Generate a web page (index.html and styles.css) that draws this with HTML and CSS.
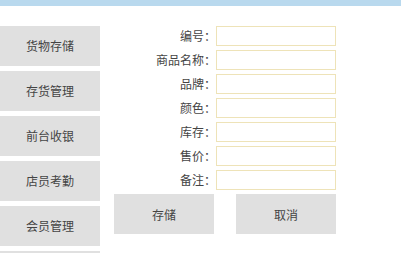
FILE: index.html
```html
<!DOCTYPE html>
<html lang="zh-CN">
<head>
  <meta charset="UTF-8" />
  <title>商品管理</title>
  <link rel="stylesheet" href="styles.css">
</head>
<body>
  <div class="topbar"></div>
  <div class="main">
    <!-- 左侧菜单 -->
    <div class="menu">
      <div class="menu-item">货物存储</div>
      <div class="menu-item">存货管理</div>
      <div class="menu-item">前台收银</div>
      <div class="menu-item">店员考勤</div>
      <div class="menu-item">会员管理</div>
      <div class="menu-item"></div>
    </div>

    <!-- 商品表单 -->
    <form class="goods-form">
      <label class="label">编号：</label><input type="text" class="field" />
      <label class="label">商品名称：</label><input type="text" class="field" />
      <label class="label">品牌：</label><input type="text" class="field" />
      <label class="label">颜色：</label><input type="text" class="field" />
      <label class="label">库存：</label><input type="text" class="field" />
      <label class="label">售价：</label><input type="text" class="field" />
      <label class="label">备注：</label><input type="text" class="field" />
      <div class="actions">
        <button type="submit" class="btn">存储</button>
        <button type="button" class="btn">取消</button>
      </div>
    </form>
  </div>
</body>
</html>
```

FILE: styles.css
```css
body {
  margin: 0;
  font-family: "Noto Sans CJK SC", "Liberation Sans", sans-serif;
  font-size: 12px;
  color: #444;
  background: #fff;
  height: 253px;
  overflow: hidden;
}
.topbar {
  height: 6px;
  background: #b9d9ee;
}
.main {
  display: flex;
  padding-top: 20px;
}
.menu {
  width: 100px;
  display: flex;
  flex-direction: column;
  gap: 5px;
}
.menu-item {
  height: 40px;
  line-height: 40px;
  text-align: center;
  background: #e0e0e0;
  color: #444;
}
.goods-form {
  margin-left: 14px;
  display: grid;
  grid-template-columns: 102px 120px;
  row-gap: 4px;
  align-content: start;
  align-items: center;
}
.label {
  text-align: right;
  line-height: 20px;
  white-space: nowrap;
}
.field {
  box-sizing: border-box;
  width: 120px;
  height: 20px;
  margin: 0;
  border: 1px solid #eee3b8;
  outline: none;
  background: #fff;
}
.actions {
  grid-column: 1 / 3;
  display: flex;
  gap: 22px;
}
.btn {
  width: 100px;
  height: 40px;
  border: none;
  background: #e0e0e0;
  color: #444;
  font-family: inherit;
  font-size: 12px;
  padding: 0;
  cursor: pointer;
}
```
